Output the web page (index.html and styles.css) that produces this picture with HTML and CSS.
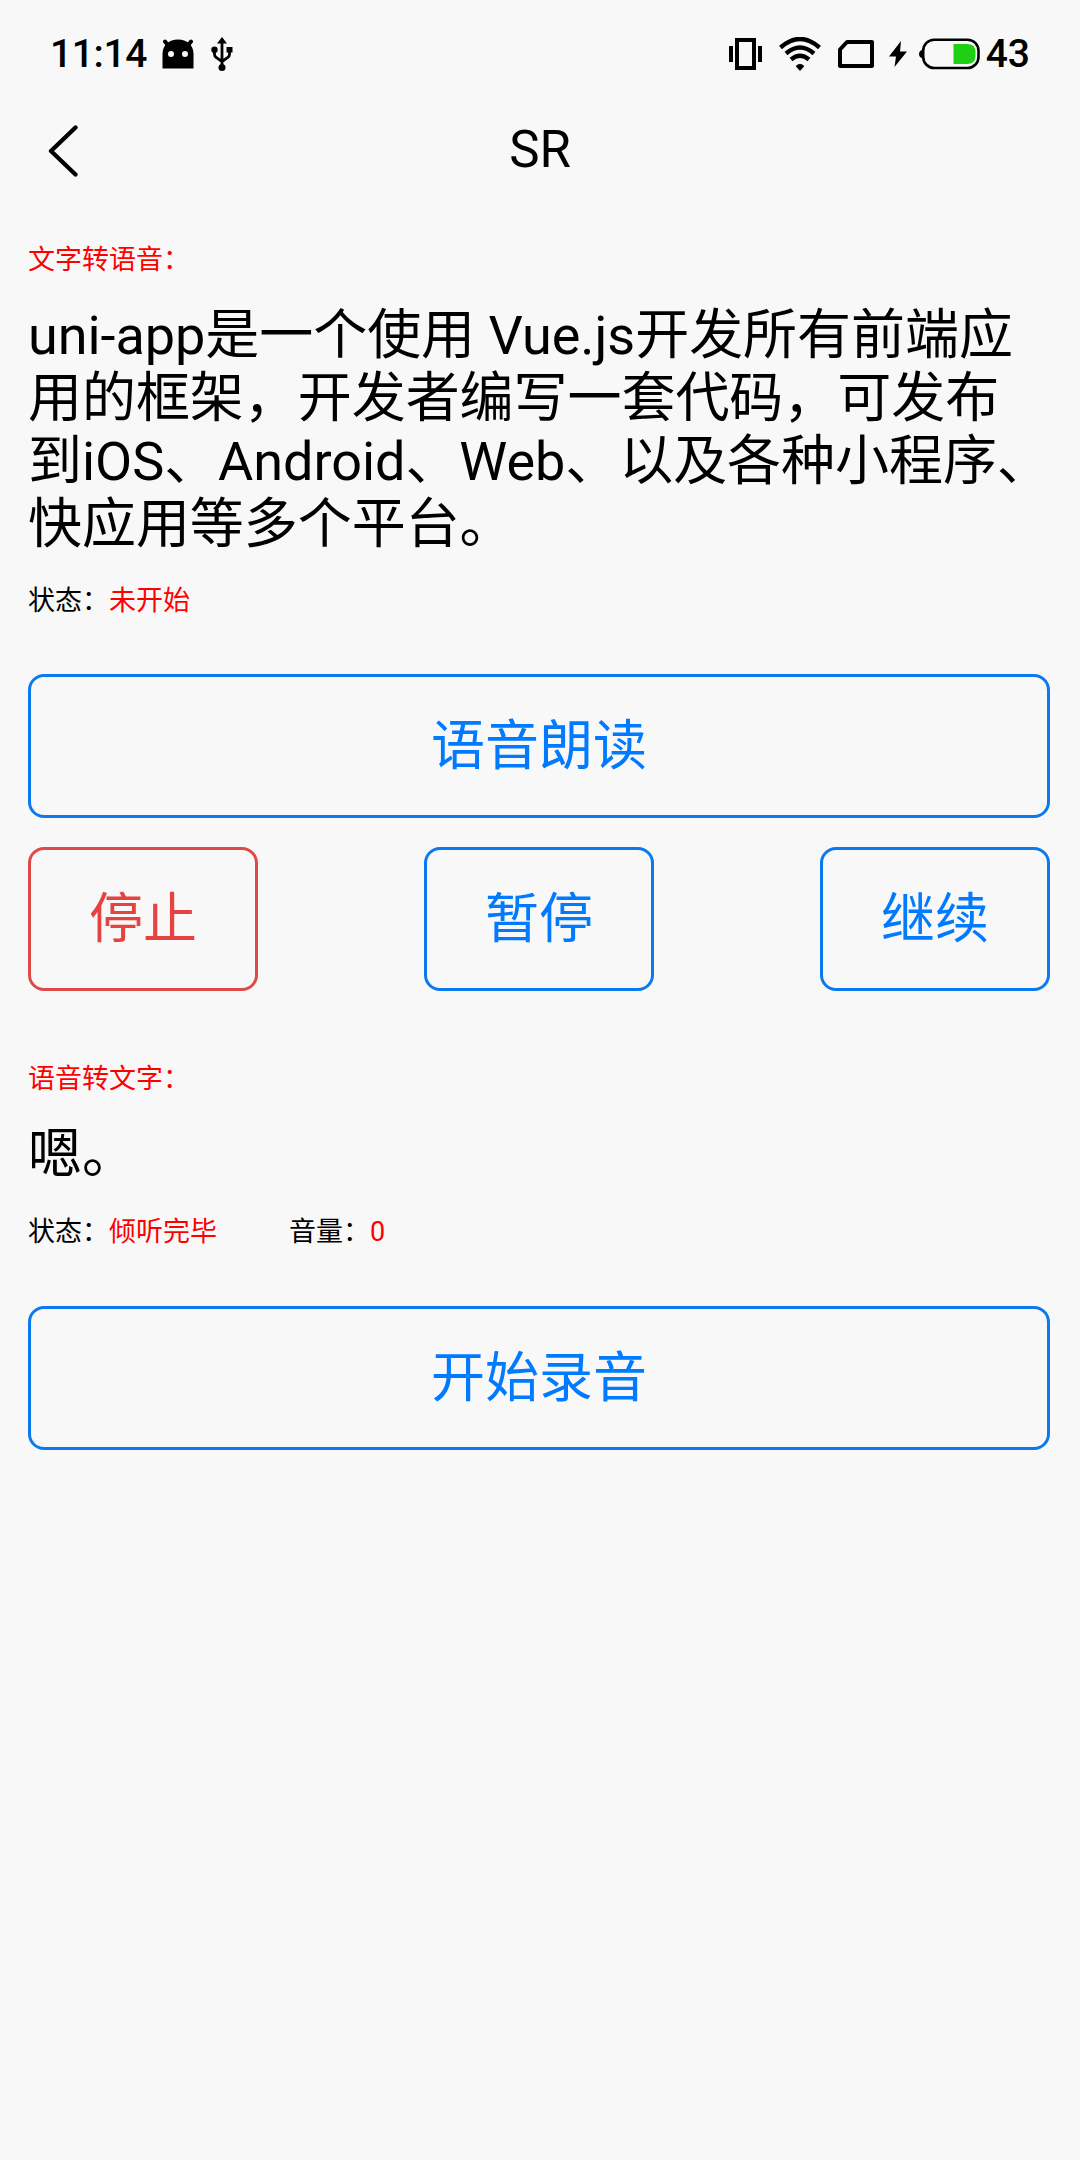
FILE: index.html
```
<!DOCTYPE html>
<html lang="zh-CN">
<head>
    <meta charset="UTF-8">
    <meta name="viewport" content="width=device-width, initial-scale=1.0">
    <title>SR</title>
    <link rel="stylesheet" href="styles.css">
</head>
<body>

    <div class="status-bar">
        <span class="time">11:14</span>
        <svg class="icon-android" width="32" height="30" viewBox="0 0 32 30">
            <path d="M3 2.500l4 5M29 2.500l-4 5" stroke="#000" stroke-width="4" stroke-linecap="round"/>
            <path fill-rule="evenodd" d="M0.500 29.500V15C0.500 6 7 0.500 16 0.500S31.500 6 31.500 15V29.500zM9 12a3 3 0 1 0 0 6a3 3 0 0 0 0-6zM23 12a3 3 0 1 0 0 6a3 3 0 0 0 0-6z"/>
        </svg>
        <svg class="icon-usb" width="22" height="34" viewBox="0 0 22 34">
            <path d="M11 4v26M3.500 13v4.500q0 2 2 3.200L11 24.500M18.500 13v4.500q0 2-2 3.200L11 24.500" fill="none" stroke="#000" stroke-width="2.800"/>
            <path d="M11 0l5 6.500H6zM15.500 10h6v5.500h-6z"/>
            <circle cx="3.500" cy="12.800" r="3.200"/>
            <circle cx="11" cy="30.500" r="3.500"/>
        </svg>

        <div class="status-right">
            <svg class="icon-vibrate" width="33" height="32" viewBox="0 0 33 32">
                <path d="M8 2h17v28H8z" fill="none" stroke="#000" stroke-width="4"/>
                <path d="M0 8h4v16H0zM29 8h4v16h-4z"/>
            </svg>
            <svg class="icon-wifi" width="42" height="34" viewBox="0 0 42 34">
                <path d="M1.500 10.500Q21-6.500 40.500 10.500M7 16.500Q21 4.500 35 16.500M12 22.500Q21 15 30 22.500" fill="none" stroke="#000" stroke-width="4.400"/>
                <path d="M21 34l-4-4.500q0-2 4-2.500q4 0.500 4 2.500z"/>
            </svg>
            <svg class="icon-sim" width="36" height="28" viewBox="0 0 36 28">
                <path d="M9 2H34V26H2V9.500z" fill="none" stroke="#000" stroke-width="4" stroke-linejoin="round"/>
            </svg>
            <svg class="icon-bolt" width="18" height="26" viewBox="0 0 18 26">
                <path d="M12 0L0 15.500h7L5.500 26L18 10.500h-7z"/>
            </svg>
            <svg class="icon-battery" width="62" height="32" viewBox="0 0 62 32">
                <rect x="4.200" y="1.700" width="55.300" height="28.300" rx="11" fill="none" stroke="#000" stroke-width="2.600"/>
                <path d="M4 11.500Q0 12.500 0 16T4 20.500z"/>
                <path d="M34.500 6H48q8.500 0 8.500 8v4q0 8-8.500 8H34.500z" fill="#1fcf16"/>
            </svg>
            <span class="battery-num">43</span>
        </div>
    </div>

    <div class="nav-bar">
        <svg class="back" width="30" height="52" viewBox="0 0 30 52">
            <path d="M27.500 2.500L3 26L27.500 49.500" fill="none" stroke="#000" stroke-width="4.300" stroke-linecap="round" stroke-linejoin="round"/>
        </svg>
        <h1>SR</h1>
    </div>

    <div class="container">
        <!-- 文字转语音 -->
        <div class="label red">文字转语音：</div>
        <p class="content">uni-app是一个使用 Vue.js开发所有前端应<br>用的框架，开发者编写一套代码，可发布<br>到iOS、Android、Web、以及各种小程序、<br>快应用等多个平台。</p>
        <div class="state">
            <div>状态：<span class="red">未开始</span></div>
        </div>
        <button class="btn">语音朗读</button>
        <div class="btn-group">
            <button class="btn btn-small btn-warn">停止</button>
            <button class="btn btn-small">暂停</button>
            <button class="btn btn-small">继续</button>
        </div>

        <!-- 语音转文字 -->
        <div class="label label-second red">语音转文字：</div>
        <p class="content">嗯。</p>
        <div class="state state-second">
            <div>状态：<span class="red">倾听完毕</span></div>
            <div>音量：<span class="red">0</span></div>
        </div>
        <button class="btn">开始录音</button>
    </div>

</body>
</html>
```
FILE: styles.css
```
* {
    box-sizing: border-box;
}
body {
    margin: 0;
    min-height: 2160px;
    font-family: Roboto, "Noto Sans CJK SC", sans-serif;
    color: #000;
    background-color: #f8f8f8;
}
svg {
    display: block;
    flex-shrink: 0;
}
.status-bar {
    display: flex;
    align-items: center;
    height: 108px;
    padding: 0 50px;
    font-size: 39px;
    line-height: 46px;
    font-weight: 500;
}
.time {
    width: 112px;
    letter-spacing: -0.4px;
}
.icon-usb {
    margin-left: 17px;
}
.status-right {
    display: flex;
    align-items: center;
    margin-left: auto;
}
.icon-wifi {
    margin-left: 17px;
}
.icon-sim {
    margin-left: 17px;
}
.icon-bolt {
    margin-left: 15px;
}
.icon-battery {
    margin-left: 12px;
}
.battery-num {
    margin-left: 5px;
}
.nav-bar {
    display: grid;
    grid-template-columns: 1fr auto 1fr;
    align-items: center;
    height: 86px;
    padding: 0 48px;
}
.nav-bar h1 {
    margin: 0 0 2px;
    font-size: 51px;
    line-height: 60px;
    font-weight: 400;
}
.container {
    padding: 50px 30px 0 28px;
}
.label {
    font-size: 27px;
    line-height: 32px;
}
.label-second {
    margin-top: 72px;
}
.content {
    margin: 28px 0 29px;
    font-size: 54px;
    line-height: 63px;
    letter-spacing: -0.05px;
    white-space: nowrap;
}
.state {
    display: flex;
    gap: 72px;
    margin-bottom: 57px;
    font-size: 27px;
    line-height: 32px;
}
.state-second {
    margin-top: 30px;
    margin-bottom: 58px;
}
.red {
    color: #f00;
}
.btn {
    display: block;
    width: 100%;
    height: 144px;
    padding: 2px 0 0;
    border: 3px solid #0a7aee;
    border-radius: 16px;
    background-color: transparent;
    color: #007aff;
    font-family: inherit;
    font-size: 54px;
    line-height: 136px;
}
.btn-group {
    display: flex;
    justify-content: space-between;
    margin-top: 29px;
}
.btn-small {
    width: 230px;
}
.btn-warn {
    border-color: #dd4a47;
    color: #e64340;
}
```
